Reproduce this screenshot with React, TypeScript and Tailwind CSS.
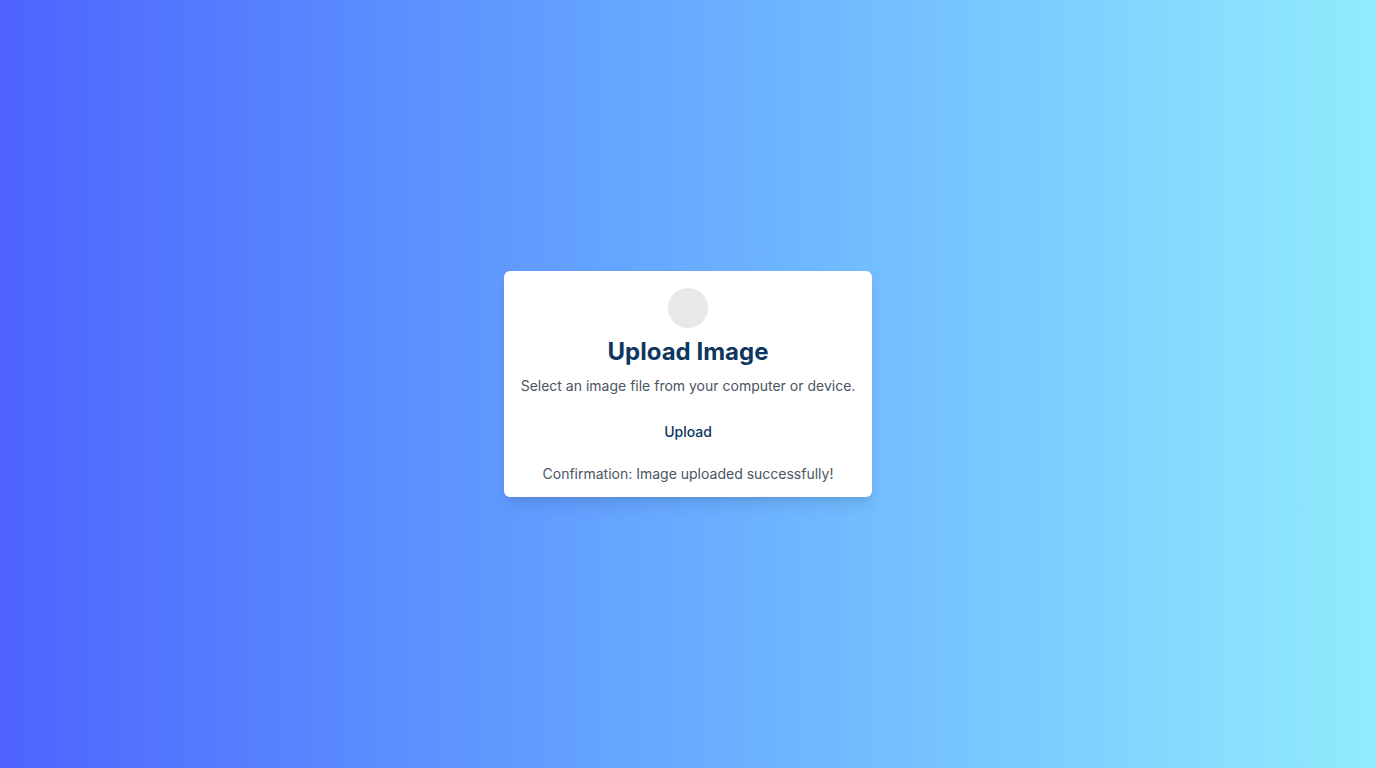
export default function App() {
  return (
    <div
      className="flex h-[768px] w-full items-center justify-center bg-gradient-to-r from-[#4e63ff] to-[#91ecfc]"
      style={{ fontFamily: 'Inter, "Noto Sans", sans-serif' }}
    >
      <div className="flex flex-col items-center rounded-md bg-white px-[17px] pt-[17px] pb-[13px] shadow-lg">
        <div className="h-10 w-10 rounded-full bg-[#e8e8e8]" />
        <h1 className="mt-2 text-2xl leading-8 font-bold text-[#0d3660]">Upload Image</h1>
        <p className="mt-2 text-sm leading-5 text-[#4b5563]">
          Select an image file from your computer or device.
        </p>
        <button className="mt-[18px] px-4 py-2 text-sm leading-5 font-medium text-[#0d3660]">
          Upload
        </button>
        <p className="mt-[14px] text-sm leading-5 text-[#4b5563]">
          Confirmation: Image uploaded successfully!
        </p>
      </div>
    </div>
  );
}
